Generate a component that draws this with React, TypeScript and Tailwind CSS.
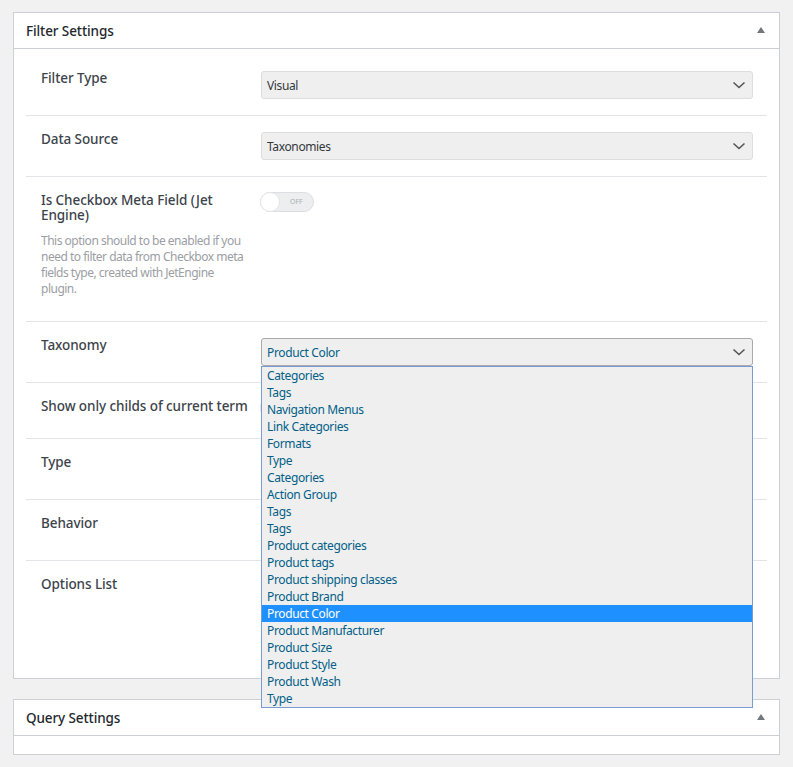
import React from 'react';

const taxonomies = [
  'Categories',
  'Tags',
  'Navigation Menus',
  'Link Categories',
  'Formats',
  'Type',
  'Categories',
  'Action Group',
  'Tags',
  'Tags',
  'Product categories',
  'Product tags',
  'Product shipping classes',
  'Product Brand',
  'Product Color',
  'Product Manufacturer',
  'Product Size',
  'Product Style',
  'Product Wash',
  'Type',
];

const Chevron = () => (
  <svg width="14" height="8" viewBox="0 0 14 8" fill="none" className="shrink-0">
    <path d="M1.5 1.5 7 6.5l5.5-5" stroke="#555" strokeWidth="1.6" />
  </svg>
);

const Select = ({ value, focused }: { value?: string; focused?: boolean }) => (
  <div
    className={`flex h-[28px] items-center justify-between rounded-[3px] border bg-[#efefef] pl-[5px] pr-[6px] text-[12px] ${
      focused ? 'border-[#aaaaaa] text-[#016087]' : 'border-[#dddddd] text-[#32373c]'
    }`}
  >
    <span className="translate-y-px tracking-[-0.37px]">{value}</span>
    <Chevron />
  </div>
);

const Toggle = ({ showLabel = true }: { showLabel?: boolean }) => (
  <div className="relative h-[20px] w-[54px] -translate-x-px rounded-full border border-[#dcdfe2] bg-[#eceef0]">
    <div className="absolute -left-px -top-px h-[20px] w-[20px] rounded-full border border-[#e3e5e7] bg-white" />
    {showLabel && (
      <span className="absolute left-[29px] top-[3px] text-[7px] leading-[12px] text-[#a9adb1]">OFF</span>
    )}
  </div>
);

const Row = ({
  label,
  children,
  className = '',
  labelClass = 'pt-[16px]',
  last,
  description,
}: {
  label: React.ReactNode;
  children?: React.ReactNode;
  className?: string;
  labelClass?: string;
  last?: boolean;
  description?: React.ReactNode;
}) => (
  <div className={`flex pl-[15px] pr-[14px] ${last ? '' : 'border-b border-[#e2e4e7]'} ${className}`}>
    <div className={`w-[220px] shrink-0 ${labelClass}`}>
      <div className="whitespace-nowrap text-[13.5px] font-medium leading-[15px] tracking-[-0.08px] text-[#3c434a]">{label}</div>
      {description && (
        <p className="mt-[10px] whitespace-nowrap text-[12px] leading-[16px] tracking-[-0.5px] text-[#9b9ea3]">{description}</p>
      )}
    </div>
    <div className="min-w-0 flex-1">{children}</div>
  </div>
);

const CardHeader = ({ title }: { title: string }) => (
  <div className="flex h-[36px] items-center justify-between border-b border-[#ccd0d4] pl-[12px] pr-[14px]">
    <h2 className="translate-y-px text-[13.5px] font-medium tracking-[-0.1px] text-[#23282d]">{title}</h2>
    <div className="h-0 w-0 -translate-y-px border-x-[4px] border-b-[6px] border-x-transparent border-b-[#72777c]" />
  </div>
);

export default function App() {
  return (
    <div className="h-[767px] overflow-hidden bg-[#f1f1f1] px-[13px] pt-[12px] font-['Noto_Sans',sans-serif]">
      {/* Filter Settings */}
      <div className="h-[667px] border border-[#ccd0d4] bg-white">
        <CardHeader title="Filter Settings" />
        <div className="mx-[12px]">
          <Row label="Filter Type" className="h-[67px]" labelClass="pt-[22px]">
            <div className="pt-[22px]">
              <Select value="Visual" />
            </div>
          </Row>
          <Row label="Data Source" className="h-[61px]">
            <div className="pt-[16px]">
              <Select value="Taxonomies" />
            </div>
          </Row>
          <Row
            label={<>Is Checkbox Meta Field (Jet<br />Engine)</>}
            description={
              <>
                This option should to be enabled if you<br />
                need to filter data from Checkbox meta<br />
                fields type, created with JetEngine<br />
                plugin.
              </>
            }
            className="h-[145px]"
          >
            <div className="pt-[15px]">
              <Toggle />
            </div>
          </Row>
          <Row label="Taxonomy" className="h-[61px]">
            <div className="relative mt-[16px]">
              <Select value="Product Color" focused />
              <ul className="absolute inset-x-0 top-full z-10 border border-[#7a9cd3] bg-[#efefef] text-[12px] text-[#016087]">
                {taxonomies.map((name, i) => (
                  <li
                    key={i}
                    className={`h-[17px] pl-[5px] leading-[17px] tracking-[-0.37px] ${
                      i === 14 ? 'bg-[#1e90ff] text-white' : ''
                    }`}
                  >
                    {name}
                  </li>
                ))}
              </ul>
            </div>
          </Row>
          <Row label="Show only childs of current term" className="h-[56px]">
            <div className="pt-[15px]">
              <Toggle showLabel={false} />
            </div>
          </Row>
          <Row label="Type" className="h-[61px]">
            <div className="pt-[16px]">
              <Select />
            </div>
          </Row>
          <Row label="Behavior" className="h-[61px]">
            <div className="pt-[16px]">
              <Select />
            </div>
          </Row>
          <Row label="Options List" last />
        </div>
      </div>

      {/* Query Settings */}
      <div className="mt-[20px] h-[56px] border border-[#ccd0d4] bg-white">
        <CardHeader title="Query Settings" />
      </div>
    </div>
  );
}
